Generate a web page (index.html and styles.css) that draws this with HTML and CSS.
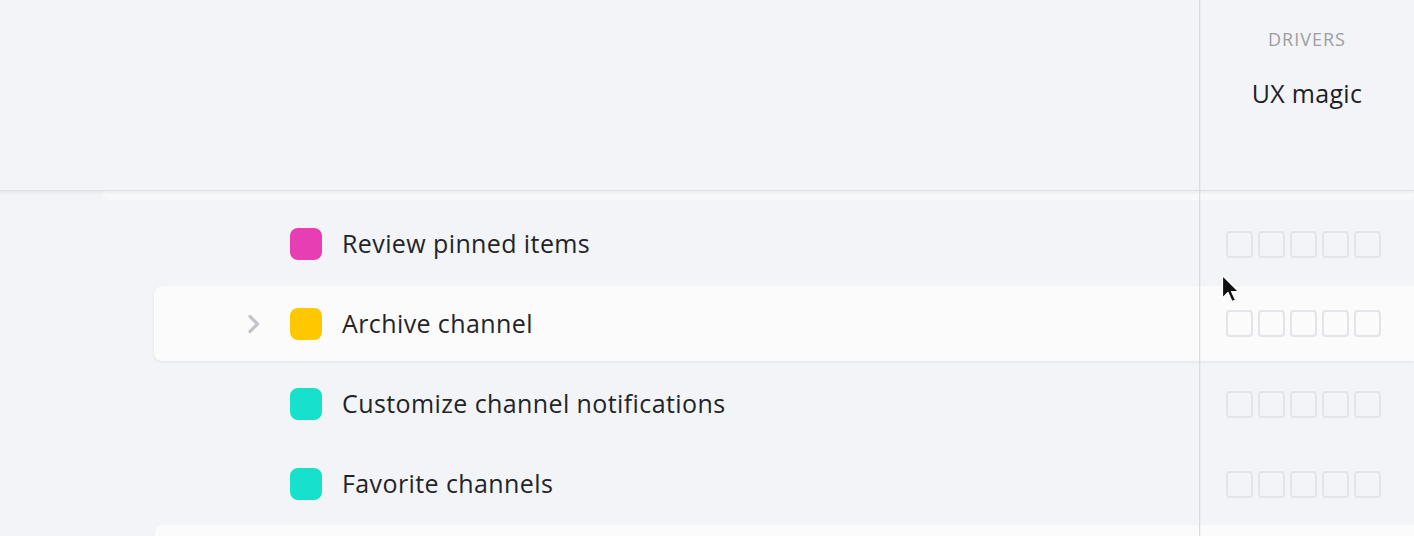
FILE: index.html
```html
<!DOCTYPE html>
<html>
<head>
<meta charset="utf-8">
<link rel="stylesheet" href="styles.css">
</head>
<body>
<div class="page">
  <header class="header">
    <div class="header-main"></div>
    <div class="header-col">
      <div class="col-label">DRIVERS</div>
      <div class="col-title">UX magic</div>
    </div>
  </header>
  <div class="peek-top"></div>
  <div class="list">
    <div class="row">
      <div class="row-main">
        <span class="toggle"></span>
        <span class="swatch pink"></span>
        <span class="row-text">Review pinned items</span>
      </div>
      <div class="boxes"><span class="box"></span><span class="box"></span><span class="box"></span><span class="box"></span><span class="box"></span></div>
    </div>
    <div class="row row-hover">
      <div class="row-main">
        <span class="toggle"><svg width="14" height="20" viewBox="0 0 14 20"><path d="M3 2.5 L10.5 10 L3 17.5" fill="none" stroke="#c3c5ca" stroke-width="3.2" stroke-linecap="round" stroke-linejoin="round"/></svg></span>
        <span class="swatch yellow"></span>
        <span class="row-text">Archive channel</span>
      </div>
      <div class="boxes"><span class="box"></span><span class="box"></span><span class="box"></span><span class="box"></span><span class="box"></span></div>
    </div>
    <div class="row">
      <div class="row-main">
        <span class="toggle"></span>
        <span class="swatch teal"></span>
        <span class="row-text">Customize channel notifications</span>
      </div>
      <div class="boxes"><span class="box"></span><span class="box"></span><span class="box"></span><span class="box"></span><span class="box"></span></div>
    </div>
    <div class="row">
      <div class="row-main">
        <span class="toggle"></span>
        <span class="swatch teal"></span>
        <span class="row-text">Favorite channels</span>
      </div>
      <div class="boxes"><span class="box"></span><span class="box"></span><span class="box"></span><span class="box"></span><span class="box"></span></div>
    </div>
  </div>
  <div class="peek-bottom"></div>
  <div class="divider"></div>
  <svg class="cursor" width="22" height="34" viewBox="0 0 22 34"><path d="M1.5 1.5 L1.5 24 L7 18.5 L11 27.5 L14.5 26 L10.5 17.5 L17.5 17.5 Z" fill="#111" stroke="#fff" stroke-width="1.2" stroke-linejoin="round"/></svg>
</div>
</body>
</html>
```
FILE: styles.css
```css
html, body {
  margin: 0;
  padding: 0;
  background: #f2f4f7;
}
.page {
  position: relative;
  width: 1414px;
  height: 536px;
  overflow: hidden;
  font-family: "Open Sans", "Liberation Sans", sans-serif;
  color: #222428;
}
.header {
  display: flex;
  height: 190px;
  border-bottom: 1px solid #dcdfe3;
  box-shadow: 0 2px 3px rgba(0, 0, 0, 0.05);
  position: relative;
  z-index: 2;
}
.header-main {
  flex: 0 0 1200px;
}
.header-col {
  flex: 1;
  display: flex;
  flex-direction: column;
  align-items: center;
  padding-top: 27px;
}
.col-label {
  font-size: 18px;
  letter-spacing: 1px;
  color: #9c9ea3;
  line-height: 24px;
}
.col-title {
  margin-top: 26px;
  font-size: 25px;
  letter-spacing: 0.3px;
  line-height: 32px;
  color: #1f2125;
}
.peek-top {
  margin-left: 103px;
  height: 9px;
  background: #f8f9fa;
  border-radius: 0 0 6px 6px;
}
.list {
  padding-top: 4px;
}
.row {
  display: flex;
  align-items: center;
  height: 80px;
  margin-left: 154px;
}
.row-hover {
  height: 75px;
  margin-top: 2px;
  margin-bottom: 3px;
  background: #fbfbfc;
  border-radius: 8px 0 0 8px;
  box-shadow: 0 1px 3px rgba(0, 0, 0, 0.08);
}
.row-main {
  flex: 0 0 1046px;
  display: flex;
  align-items: center;
  padding-left: 90px;
  box-sizing: border-box;
}
.toggle {
  width: 20px;
  height: 20px;
  margin-right: 26px;
  display: flex;
  align-items: center;
  justify-content: center;
}
.swatch {
  width: 32px;
  height: 32px;
  border-radius: 8px;
  margin-right: 20px;
}
.pink { background: #e83eb4; }
.yellow { background: #ffc700; }
.teal { background: #17e0cc; }
.row-text {
  font-size: 25px;
  letter-spacing: 0.4px;
  line-height: 32px;
  margin-top: -2px;
  color: #222428;
}
.boxes {
  display: flex;
  gap: 5px;
  padding-left: 26px;
}
.box {
  width: 23px;
  height: 23px;
  border: 2px solid #e3e5e8;
  border-radius: 4px;
}
.peek-bottom {
  margin-left: 155px;
  height: 20px;
  margin-top: 1px;
  background: #fbfbfc;
  border-radius: 8px 0 0 0;
}
.divider {
  position: absolute;
  top: 0;
  bottom: 0;
  left: 1199px;
  width: 1px;
  background: #d9dce0;
  box-shadow: 1px 0 1px rgba(0, 0, 0, 0.04);
  z-index: 3;
}
.cursor {
  position: absolute;
  left: 1221px;
  top: 274px;
  z-index: 5;
}
```
